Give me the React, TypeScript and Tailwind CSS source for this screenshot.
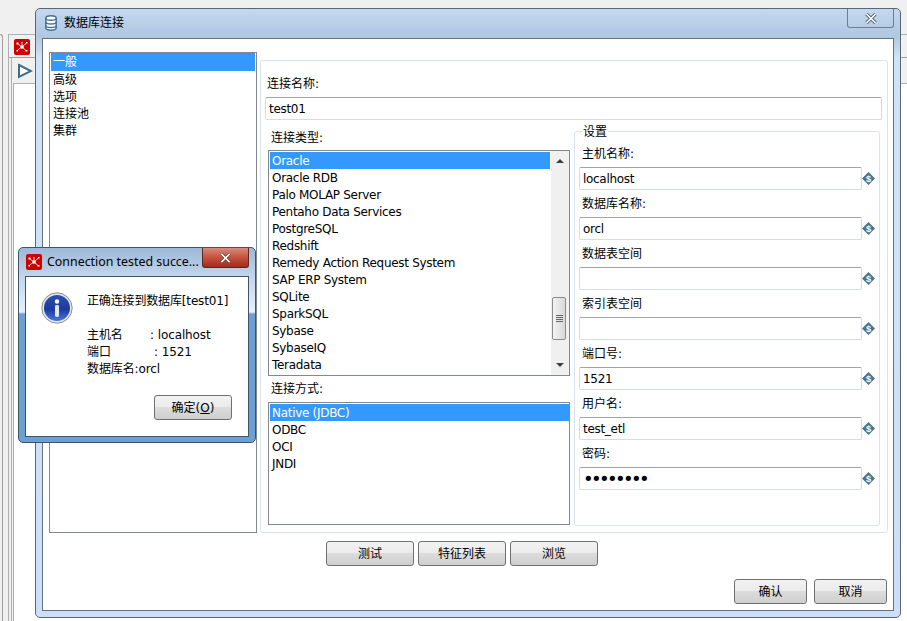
import React from 'react'

const sans = "font-['DejaVu_Sans','Noto_Sans_CJK_SC',sans-serif]"

const connectionTypes = [
  'Oracle',
  'Oracle RDB',
  'Palo MOLAP Server',
  'Pentaho Data Services',
  'PostgreSQL',
  'Redshift',
  'Remedy Action Request System',
  'SAP ERP System',
  'SQLite',
  'SparkSQL',
  'Sybase',
  'SybaseIQ',
  'Teradata',
]

const settings = [
  { label: '主机名称:', value: 'localhost' },
  { label: '数据库名称:', value: 'orcl' },
  { label: '数据表空间', value: '' },
  { label: '索引表空间', value: '' },
  { label: '端口号:', value: '1521' },
  { label: '用户名:', value: 'test_etl' },
  { label: '密码:', value: '••••••••', password: true },
]

function AppLogo() {
  return (
    <svg width="16" height="16" viewBox="0 0 16 16" className="shrink-0">
      <rect width="16" height="16" rx="2" fill="#cc0000" />
      <path d="M8 8 3.5 4.5M8 8l4.5-4M8 8l-4.5 3M8 8l4 3.5M8 8v-4" stroke="#ffc8c8" strokeWidth="1" />
      <g fill="#fff">
        <circle cx="8" cy="8" r="1.8" />
        <rect x="2.5" y="3.5" width="2" height="2" />
        <rect x="12" y="3" width="1.5" height="1.5" />
        <rect x="2.5" y="11" width="1.5" height="1.5" />
        <rect x="11.5" y="11" width="2" height="1.5" />
        <rect x="7.5" y="3" width="1" height="1" />
      </g>
    </svg>
  )
}

function DbIcon() {
  return (
    <svg width="12" height="16" viewBox="0 0 12 16" fill="#fff" stroke="#4a7391" strokeWidth="1.5" className="shrink-0">
      <path d="M.8 3.2C.8 1.8 3 .8 6 .8s5.2 1 5.2 2.4v9.6c0 1.4-2.2 2.4-5.2 2.4s-5.2-1-5.2-2.4z" />
      <path d="M.8 3.2c0 1.3 2.2 2 5.2 2s5.2-.7 5.2-2M.8 7c0 1.3 2.2 2 5.2 2s5.2-.7 5.2-2M.8 10.6c0 1.3 2.2 2 5.2 2s5.2-.7 5.2-2" fill="none" />
    </svg>
  )
}

function VarIcon() {
  return (
    <svg width="13" height="13" viewBox="0 0 14 14" className="shrink-0">
      <polygon points="7,0 14,7 7,14 0,7" fill="#4a7391" />
      <text x="7" y="10.5" textAnchor="middle" fontSize="10" fontFamily="Liberation Sans" fontWeight="700" fill="#fff">$</text>
    </svg>
  )
}

function InfoIcon() {
  return (
    <svg width="32" height="32" viewBox="0 0 32 32" className="shrink-0">
      <defs>
        <linearGradient id="info" x1="0" y1="0" x2="0" y2="1">
          <stop offset="0" stopColor="#2b4fb5" />
          <stop offset="0.55" stopColor="#1c3a9c" />
          <stop offset="1" stopColor="#4a78dc" />
        </linearGradient>
      </defs>
      <circle cx="16" cy="16" r="15.2" fill="#e4e6ea" stroke="#8a8f96" strokeWidth="1" />
      <circle cx="16" cy="16" r="13" fill="url(#info)" />
      <circle cx="16" cy="9.5" r="2.2" fill="#fff" />
      <rect x="14" y="13" width="4" height="12" rx="1.4" fill="#dfe6f5" />
    </svg>
  )
}

function Button({ children, className }: { children: React.ReactNode; className: string }) {
  return (
    <div
      className={`h-[25px] flex items-center justify-center rounded-[3px] border border-[#707070] bg-[linear-gradient(#f2f2f2_0%,#ebebeb_48%,#dcdcdc_50%,#cfcfcf_100%)] text-[12px] text-black ${className}`}
    >
      {children}
    </div>
  )
}

function ScrollBar() {
  return (
    <div className="w-[18px] shrink-0 ml-auto self-stretch flex flex-col items-center bg-[#f0f0f0] relative">
      <div className="mt-[8px] w-0 h-0 border-x-[4px] border-x-transparent border-b-[4px] border-b-[#404040]" />
      <div className="absolute left-[1px] top-[146px] w-[14px] h-[43px] rounded-[2px] border border-[#8c8c8c] bg-[linear-gradient(90deg,#f4f4f4,#d8d8d8)] flex flex-col items-center justify-center gap-[1px]">
        <div className="w-[7px] h-[1px] bg-[#666]" />
        <div className="w-[7px] h-[1px] bg-[#666]" />
        <div className="w-[7px] h-[1px] bg-[#666]" />
        <div className="w-[7px] h-[1px] bg-[#666]" />
      </div>
      <div className="mt-auto mb-[8px] w-0 h-0 border-x-[4px] border-x-transparent border-t-[4px] border-t-[#404040]" />
    </div>
  )
}

function ListRow({ text, selected, size = 'h-[17px] leading-[18px]' }: { text: string; selected?: boolean; size?: string }) {
  return (
    <div className={`${size} pl-[2px] whitespace-nowrap ${selected ? 'bg-[#3399ff] text-white' : 'text-black'}`}>
      {text}
    </div>
  )
}

function SettingField({ label, value, password }: { label: string; value: string; password?: boolean }) {
  return (
    <div className="h-[50px] flex flex-col">
      <div className="h-[21px] leading-[16px] pl-[3px] whitespace-nowrap">{label}</div>
      <div className="flex items-center">
        <div
          className={`w-[283px] h-[23px] pl-[3px] rounded-[2px] border border-[#d5dce6] border-t-[#a3a3a3] bg-white whitespace-nowrap overflow-hidden ${
            password ? 'leading-[22px] text-[18px] tracking-[-2.6px]' : 'leading-[23px] tracking-[-0.3px]'
          }`}
        >
          {value}
        </div>
        <VarIcon />
      </div>
    </div>
  )
}

function MainWindow() {
  return (
    <div className="absolute left-[35px] top-[8px] w-[866px] h-[610px] rounded-[5px] border border-[#5c6670] bg-[linear-gradient(180deg,#c4d8ef_0%,#b0c7e2_4.5%,#cfe2f8_8%,#cbe0f8_100%)] flex flex-col px-[6px] pb-[6px]">
      <div className="h-[29px] shrink-0 flex items-start pl-[3px] gap-[7px]">
        <div className="mt-[6px]">
          <DbIcon />
        </div>
        <span className="text-[12px] leading-[29px] text-black">数据库连接</span>
        <div className="ml-auto w-[47px] h-[19px] rounded-b-[3px] border border-t-0 border-[#6f7e8f] flex items-center justify-center">
          <svg width="12" height="11" viewBox="0 0 12 11">
            <path d="M1.5 1 10.5 10M10.5 1 1.5 10" stroke="#55606c" strokeWidth="3.4" />
            <path d="M1.5 1 10.5 10M10.5 1 1.5 10" stroke="#fff" strokeWidth="1.6" />
          </svg>
        </div>
      </div>
      <div className="flex-1 min-h-0 bg-white border border-[#6b7178] border-t-[#6f6f6f] flex flex-col pt-[13px] pl-[6px]">
        <div className="flex h-[481px]">
          <div className="w-[208px] shrink-0 border border-[#828790] px-[1px] flex flex-col">
            {['一般', '高级', '选项', '连接池', '集群'].map((item, i) => (
              <ListRow key={item} text={item} selected={i === 0} size={i === 0 ? 'h-[18px] leading-[19px]' : 'h-[17px] leading-[19px]'} />
            ))}
          </div>
          <div className="mt-[8px] ml-[3px] w-[628px] rounded-[3px] border border-[#d9e3ec] px-[4px] flex flex-col">
            <div className="h-[14px] mt-[16px] leading-[14px] pl-[2px]">连接名称:</div>
            <div className="mt-[6px] w-[617px] h-[23px] leading-[22px] pl-[3px] rounded-[2px] border border-[#d5dce6] border-t-[#a3a3a3] whitespace-nowrap tracking-[-0.3px]">test01</div>
            <div className="flex mt-[11px] flex-1 min-h-0">
              <div className="w-[302px] shrink-0 ml-[3px] flex flex-col">
                <div className="h-[19px] leading-[14px] pl-[3px]">连接类型:</div>
                <div className="h-[226px] border border-[#828790] flex pl-[1px] overflow-hidden tracking-[-0.3px]">
                  <div className="w-[280px] pt-[1px] shrink-0">
                    {connectionTypes.map((t, i) => (
                      <ListRow key={t} text={t} selected={i === 0} />
                    ))}
                  </div>
                  <ScrollBar />
                </div>
                <div className="h-[26px] leading-[27px] pl-[3px]">连接方式:</div>
                <div className="h-[123px] border border-[#828790] pl-[1px] pt-[1px] tracking-[-0.3px]">
                  {['Native (JDBC)', 'ODBC', 'OCI', 'JNDI'].map((t, i) => (
                    <ListRow key={t} text={t} selected={i === 0} />
                  ))}
                </div>
              </div>
              <div className="relative ml-[4px] w-[306px] h-[395px] rounded-[3px] border border-[#d9e3ec] pl-[4px] pt-[14px]">
                <span className="absolute left-[7px] top-[-7px] bg-white px-[1px] leading-[14px]">设置</span>
                {settings.map((f) => (
                  <SettingField key={f.label} {...f} />
                ))}
              </div>
            </div>
          </div>
        </div>
        <div className="flex mt-[8px] ml-[277px] gap-[4px]">
          <Button className="w-[88px]">测试</Button>
          <Button className="w-[88px]">特征列表</Button>
          <Button className="w-[88px]">浏览</Button>
        </div>
        <div className="flex mt-[13px] justify-end pr-[6px]">
          <Button className="w-[73px]">确认</Button>
          <Button className="w-[73px] ml-[7px]">取消</Button>
        </div>
      </div>
    </div>
  )
}

function TestedDialog() {
  return (
    <div className="absolute left-[18px] top-[247px] w-[238px] h-[196px] rounded-[5px] border border-[#3f5468] bg-[linear-gradient(180deg,#9db8d8_0%,#c3d6ec_15%,#e8f0fa_33%,#6d9fd2_34%,#6d9fd2_100%)] flex flex-col px-[6px] pb-[5px]">
      <div className="h-[28px] shrink-0 flex items-center gap-[5px] pl-[1px]">
        <AppLogo />
        <span className="font-['Noto_Sans'] text-[12.4px] text-black whitespace-nowrap">Connection tested succe...</span>
      </div>
      <div className="absolute right-[6px] top-0 w-[47px] h-[20px] rounded-b-[3px] border border-t-0 border-[#5a2a22] bg-[linear-gradient(180deg,#d98b7c_0%,#c5523e_50%,#a32b1c_100%)] flex items-center justify-center">
        <svg width="11" height="10" viewBox="0 0 12 11">
          <path d="M1.5 1 10.5 10M10.5 1 1.5 10" stroke="#5b3a34" strokeWidth="3.4" />
          <path d="M1.5 1 10.5 10M10.5 1 1.5 10" stroke="#fff" strokeWidth="1.8" />
        </svg>
      </div>
      <div className="flex-1 bg-white border border-[#3f5468] flex flex-col">
        <div className="flex flex-1 pl-[15px] pt-[15px]">
          <InfoIcon />
          <div className="ml-[14px] flex flex-col leading-[17px] pt-[1px] tracking-[-0.1px]">
            <div className="whitespace-nowrap tracking-[-0.15px]">正确连接到数据库[test01]</div>
            <div className="mt-[17px] flex whitespace-nowrap">
              <span className="w-[63px]">主机名</span>
              <span>: localhost</span>
            </div>
            <div className="flex whitespace-nowrap">
              <span className="w-[67px]">端口</span>
              <span>: 1521</span>
            </div>
            <div className="whitespace-nowrap">数据库名:orcl</div>
          </div>
        </div>
        <div className="flex justify-end pr-[16px] pb-[16px]">
          <Button className="w-[78px]">
            确定(<span className="underline">O</span>)
          </Button>
        </div>
      </div>
    </div>
  )
}

export default function App() {
  return (
    <div className={`relative w-[907px] h-[621px] overflow-hidden bg-[#f0f0f0] text-[12px] text-black ${sans}`}>
      {/* application behind the dialogs */}
      <div className="flex h-full pt-[34px]">
        <div className="w-[3px] border-t border-r border-[#a0a0a0] rounded-tr-[3px]" />
        <div className="ml-[5px] flex-1 border-t border-l border-[#b0b0b0] flex flex-col">
          <div className="h-[23px] shrink-0 border-b border-[#a0a0a0] pl-[5px] pt-[4px]">
            <AppLogo />
          </div>
          <div className="flex-1 ml-[2px] border-l border-[#b0b0b0] flex flex-col">
            <div className="h-[25px] shrink-0 flex items-center pl-[5px]">
              <svg width="16" height="16" viewBox="0 0 16 16" fill="#fff" stroke="#3f6b8c" strokeWidth="2">
                <path d="M2 2l12 6-12 6z" />
              </svg>
            </div>
            <div className="flex-1 ml-[1px] border-t border-l border-[#b0b0b0] bg-white" />
          </div>
        </div>
      </div>
      <MainWindow />
      <TestedDialog />
    </div>
  )
}
